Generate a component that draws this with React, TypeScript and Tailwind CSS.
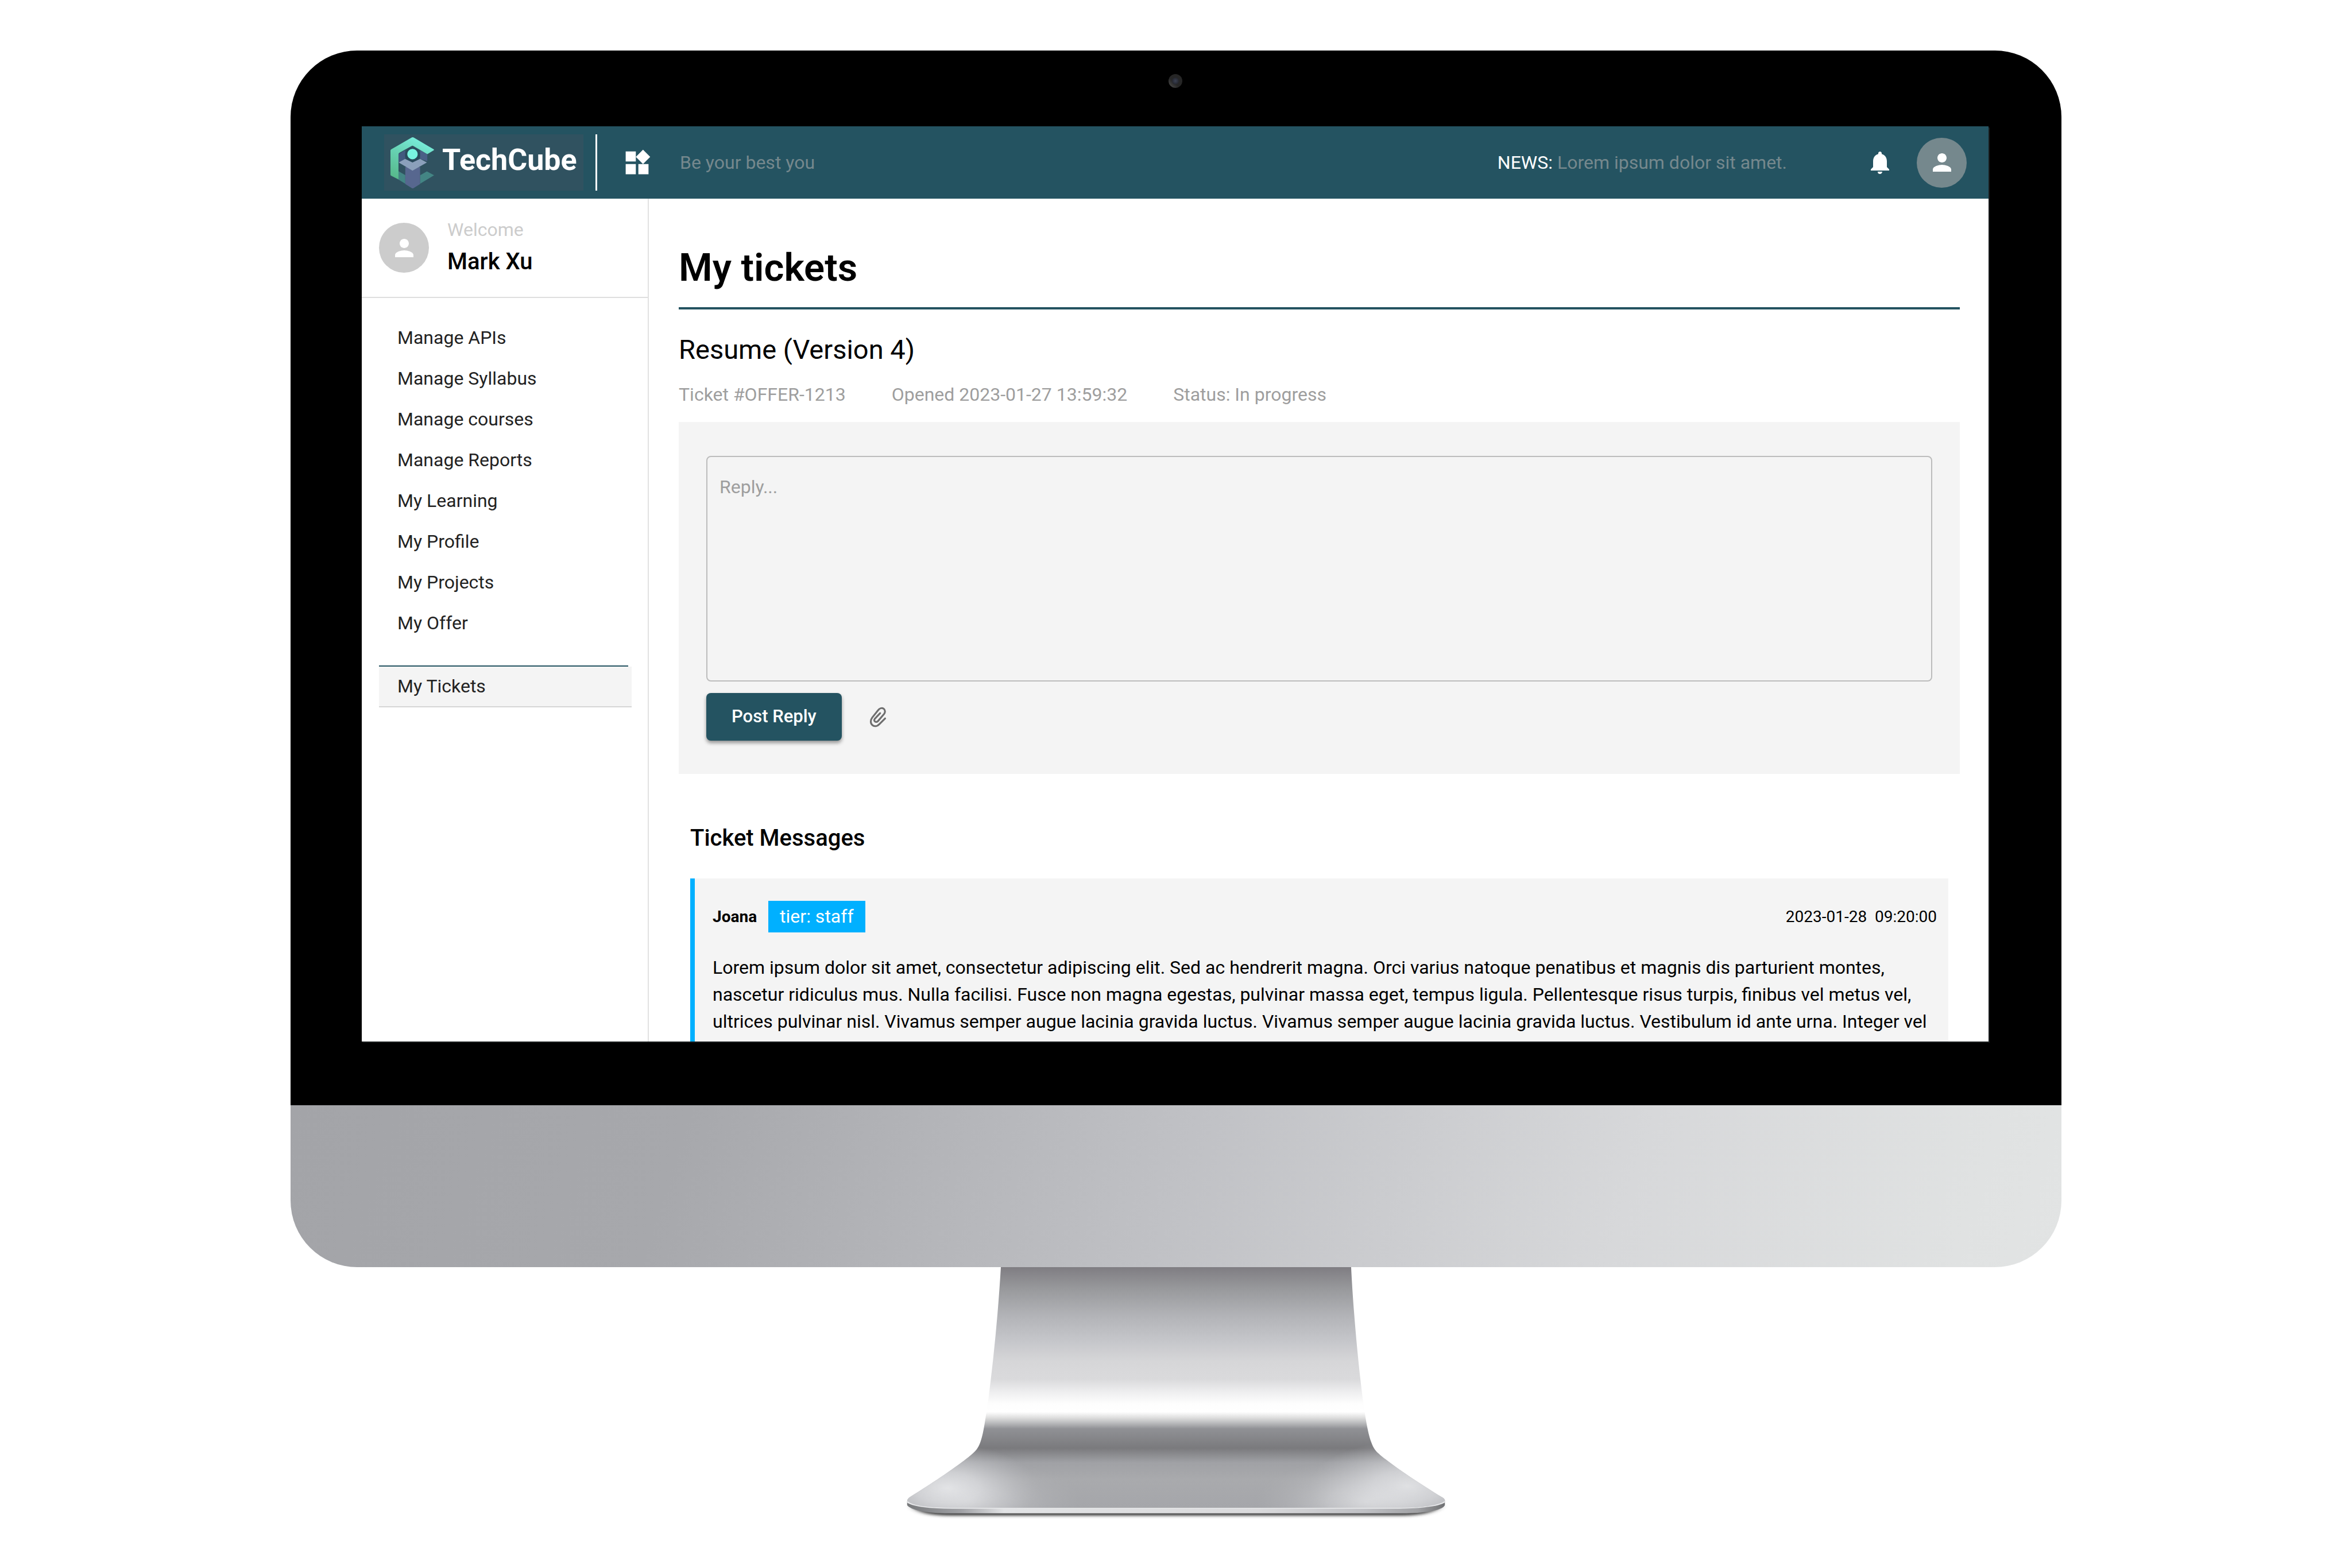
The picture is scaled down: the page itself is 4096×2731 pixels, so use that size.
import React from "react";
import { MdWidgets, MdNotifications, MdPerson } from "react-icons/md";

const menu = [
  "Manage APIs",
  "Manage Syllabus",
  "Manage courses",
  "Manage Reports",
  "My Learning",
  "My Profile",
  "My Projects",
  "My Offer",
];

function CubeMark() {
  return (
    <svg viewBox="189 118 218 312" preserveAspectRatio="none" className="h-[89px] w-[76px]" aria-hidden="true">
      <defs>
        <linearGradient id="cube" x1="0.7" y1="0" x2="0.2" y2="1">
          <stop offset="0" stopColor="#7af0df" />
          <stop offset="0.45" stopColor="#68d3b5" />
          <stop offset="1" stopColor="#57b98c" />
        </linearGradient>
      </defs>
      <path d="M228 222L263 197V250L228 274Z" fill="#42597f" />
      <path d="M337 197L373 222V264L337 250Z" fill="#4a5f86" />
      <ellipse cx="299" cy="226" rx="37" ry="45" fill="#294a5c" />
      <path d="M228 325L263 349V402L228 376Z" fill="#438584" />
      <path d="M371 327L407 350L337 402V350Z" fill="#438584" />
      <path d="M263 300H337V404L304 429Q300 431 296 429L263 404Z" fill="#57678f" />
      <path d="M230 272L262 250L299 272L337 250L371 272L299 322Z" fill="#8ba0bb" />
      <path
        d="M295 120Q300 116 305 120L405 192Q408 195 405 198L373 221L302 171Q299 169 296 171L235 212Q229 216 229 222V376L192 353Q189 351 189 346V200Q189 195 193 192Z"
        fill="url(#cube)"
      />
      <ellipse cx="299" cy="221" rx="26" ry="32" fill="#78f3e0" />
    </svg>
  );
}

function Paperclip() {
  return (
    <svg
      viewBox="70 65 110 132"
      className="h-[38px] w-8"
      fill="none"
      stroke="currentColor"
      strokeWidth="11"
      strokeLinecap="round"
      strokeLinejoin="round"
      aria-hidden="true"
    >
      <path d="M168 139L133 174C121 187 105 189 93 181C80 172 77 152 90 134L125 90C134 78 148 73 159 80C169 87 170 102 162 112L126 154C119 162 110 162 105 156C101 151 102 146 106 141L138 107" />
    </svg>
  );
}

function Avatar({ tone }: { tone: string }) {
  return (
    <span className={`flex size-[87px] shrink-0 items-center justify-center rounded-full text-white ${tone}`}>
      <MdPerson className="size-12" />
    </span>
  );
}

function Header() {
  return (
    <header className="flex h-[126px] shrink-0 items-center bg-[#245361] pr-[38px] pl-[39px] text-[32px] text-white">
      <a href="#home" className="flex h-[98px] w-[347px] items-center gap-3.5 bg-[#305260] pl-[11px]">
        <CubeMark />
        <span className="pb-2 text-[52px] leading-none font-bold">TechCube</span>
      </a>
      <span className="ml-[21px] h-[98px] w-[3px] bg-white" />
      <button type="button" aria-label="Apps" className="ml-[43px]">
        <MdWidgets className="size-[53px]" />
      </button>
      <p className="ml-12 text-[#75888d]">Be your best you</p>
      <p className="ml-auto text-[#75888d]">
        <span className="text-white">NEWS:</span> Lorem ipsum dolor sit amet.
      </p>
      <button type="button" aria-label="Notifications" className="ml-[138px]">
        <MdNotifications className="size-12" />
      </button>
      <button type="button" aria-label="Account" className="ml-10">
        <Avatar tone="bg-[#75888d]" />
      </button>
    </header>
  );
}

function Sidebar() {
  return (
    <aside className="w-[500px] shrink-0 border-r-2 border-[#e2e2e2]">
      <div className="flex h-[173px] items-center gap-8 border-b-2 border-[#dedede] pl-[30px]">
        <Avatar tone="bg-[#cccccc]" />
        <div>
          <p className="text-[32px] leading-12 text-[#cccccc]">Welcome</p>
          <p className="text-[40px] leading-16 font-medium">Mark Xu</p>
        </div>
      </div>
      <nav className="pt-[34px] pr-7 pl-[30px] text-[32px] leading-[71px] text-[#222222]">
        <ul>
          {menu.map((label) => (
            <li key={label}>
              <a href="#menu" className="block pl-8">
                {label}
              </a>
            </li>
          ))}
        </ul>
        <hr className="mt-[38px] mr-1.5 h-0.5 border-0 bg-[#245361]" />
        <a href="#tickets" aria-current="page" className="block border-b-2 border-[#d6d6d6] bg-[#f4f4f4] pl-8 leading-[69px]">
          My Tickets
        </a>
      </nav>
    </aside>
  );
}

function Tickets() {
  return (
    <main className="min-w-0 grow pt-20 pr-[50px] pl-[52px]">
      <h1 className="border-b-4 border-[#245361] pb-[29px] text-[67px] leading-20 font-semibold">My tickets</h1>
      <h2 className="mt-10 text-[47px] leading-[60px]">Resume (Version 4)</h2>
      <div className="mt-7 flex gap-20 text-[32px] leading-10 text-[#9e9e9e]">
        <span>Ticket #OFFER-1213</span>
        <span>Opened 2023-01-27 13:59:32</span>
        <span>Status: In progress</span>
      </div>
      <form className="mt-7 bg-[#f4f4f4] px-12 pt-[59px] pb-[58px]">
        <textarea
          aria-label="Reply"
          placeholder="Reply..."
          className="block h-[393px] w-full resize-none rounded-lg border-2 border-[#bcbcbc] px-[21px] py-7 text-[32px] leading-12 placeholder:text-[#9e9e9e]"
        />
        <div className="mt-5 flex items-center gap-[47px]">
          <button
            type="button"
            className="h-[83px] rounded-lg bg-[#245361] px-11 text-[31px] font-medium text-white shadow-[0_4px_6px_rgba(0,0,0,0.4)]"
          >
            Post Reply
          </button>
          <button type="button" aria-label="Attach file" className="text-[#6e6e6e]">
            <Paperclip />
          </button>
        </div>
      </form>
      <section className="mx-5 mt-21">
        <h2 className="text-[40px] leading-14 font-medium">Ticket Messages</h2>
        <article className="mt-[42px] border-l-8 border-[#00b0ff] bg-[#f4f4f4] pt-[39px] pr-5 pb-10 pl-[31px]">
          <div className="flex items-center text-[28px]">
            <span className="font-bold">Joana</span>
            <span className="ml-5 bg-[#00b0ff] px-5 text-[32px] leading-[55px] text-white">tier: staff</span>
            <time className="ml-auto whitespace-pre">2023-01-28  09:20:00</time>
          </div>
          <p className="mt-[38px] text-[32px] leading-[47px]">
            Lorem ipsum dolor sit amet, consectetur adipiscing elit. Sed ac hendrerit magna. Orci varius natoque
            penatibus et magnis dis parturient montes, nascetur ridiculus mus. Nulla facilisi. Fusce non magna egestas,
            pulvinar massa eget, tempus ligula. Pellentesque risus turpis, finibus vel metus vel, ultrices pulvinar
            nisl. Vivamus semper augue lacinia gravida luctus. Vivamus semper augue lacinia gravida luctus. Vestibulum
            id ante urna. Integer vel
          </p>
        </article>
      </section>
    </main>
  );
}

function Stand() {
  const body =
    "M317 77H1251C1256 300 1270 650 1286 890C1293 990 1301 1090 1318 1130C1340 1180 1425 1305 1495 1395C1500 1402 1502 1410 1501 1418C1480 1445 1420 1456 1380 1456H188C120 1456 80 1437 67 1418C67 1405 70 1398 76 1390C140 1305 220 1190 248 1130C268 1090 272 990 282 860C298 600 310 330 317 77Z";
  return (
    <svg viewBox="0 77 1568 1491" preserveAspectRatio="none" className="mx-auto block h-[454px] w-[1024px]" aria-hidden="true">
      <defs>
        <linearGradient id="neck" gradientUnits="userSpaceOnUse" x1="0" y1="77" x2="0" y2="1457">
          <stop offset="0" stopColor="#7f7d82" />
          <stop offset="0.09" stopColor="#98999c" />
          <stop offset="0.2" stopColor="#b2b3b7" />
          <stop offset="0.31" stopColor="#c6c7cb" />
          <stop offset="0.39" stopColor="#d6d6d8" />
          <stop offset="0.465" stopColor="#dadadc" />
          <stop offset="0.52" stopColor="#efeff0" />
          <stop offset="0.565" stopColor="#fdfdfd" />
          <stop offset="0.6" stopColor="#ffffff" />
          <stop offset="0.625" stopColor="#dddddd" />
          <stop offset="0.65" stopColor="#b3b4b6" />
          <stop offset="0.67" stopColor="#909195" />
          <stop offset="0.75" stopColor="#7a7a7d" />
          <stop offset="0.81" stopColor="#a0a1a5" />
          <stop offset="0.88" stopColor="#a9aaad" />
          <stop offset="1" stopColor="#a5a6aa" />
        </linearGradient>
        <radialGradient id="shine">
          <stop offset="0" stopColor="#e9eaec" />
          <stop offset="0.35" stopColor="#d8d9dc" stopOpacity="0.85" />
          <stop offset="1" stopColor="#b8b9bd" stopOpacity="0" />
        </radialGradient>
        <linearGradient id="rim">
          <stop offset="0" stopColor="#77797b" />
          <stop offset="0.1" stopColor="#a0a1a5" />
          <stop offset="0.18" stopColor="#e2e3e5" />
          <stop offset="0.65" stopColor="#dadadc" />
          <stop offset="0.85" stopColor="#c0c1c5" />
          <stop offset="0.95" stopColor="#a0a1a4" />
          <stop offset="1" stopColor="#6f7072" />
        </linearGradient>
        <filter id="soft" x="-5%" y="-50%" width="110%" height="200%">
          <feGaussianBlur stdDeviation="9" />
        </filter>
        <clipPath id="bodyClip">
          <path d={body} />
        </clipPath>
      </defs>
      <path d="M80 1440H1490C1480 1480 1430 1498 1390 1498H178C130 1498 90 1480 80 1440Z" fill="#3c3c3c" filter="url(#soft)" />
      <path d={body} fill="url(#neck)" />
      <g clipPath="url(#bodyClip)">
        <ellipse cx="175" cy="1340" rx="240" ry="250" fill="url(#shine)" />
        <ellipse cx="240" cy="1420" rx="290" ry="240" fill="url(#shine)" opacity="0.4" />
        <ellipse cx="1400" cy="1330" rx="260" ry="260" fill="url(#shine)" />
        <ellipse cx="1290" cy="1420" rx="290" ry="250" fill="url(#shine)" opacity="0.6" />
      </g>
      <path
        d="M67 1418C80 1445 130 1456 188 1456H1380C1440 1456 1490 1440 1501 1418V1438C1495 1470 1440 1485 1390 1485H178C120 1485 75 1465 67 1438Z"
        fill="url(#rim)"
      />
      <path d="M67 1418C80 1445 130 1456 188 1456H1380C1440 1456 1490 1440 1501 1418" fill="none" stroke="#e9eaec" strokeWidth="5" />
    </svg>
  );
}

export default function App() {
  return (
    <div className="min-h-screen bg-white px-10 pt-22 font-['Roboto',sans-serif] text-black">
      <div className="mx-auto max-w-[3084px]">
        <div className="rounded-t-[116px] bg-black pr-[127px] pb-[111px] pl-[124px]">
          <div className="flex h-[132px] justify-center pt-[41px]">
            <span className="flex size-6 items-center justify-center rounded-full bg-linear-to-tr from-[#555555] via-[#262626] via-40% to-[#262626]">
              <span className="size-3 rounded-full bg-radial from-[#3b4152] to-[#1c1d22]" />
            </span>
          </div>
          <div className="flex aspect-video w-full flex-col overflow-hidden bg-white shadow-[2px_2px_0_#1a1d1e]">
            <Header />
            <div className="flex min-h-0 grow">
              <Sidebar />
              <Tickets />
            </div>
          </div>
        </div>
        <div className="h-[282px] rounded-b-[116px] bg-[linear-gradient(108deg,#a3a4a8_0%,#a7a8ac_22%,#c0c1c5_50%,#d7d8da_75%,#e0e2e2_94%,#e2e4e4_100%)]" />
      </div>
      <Stand />
    </div>
  );
}
